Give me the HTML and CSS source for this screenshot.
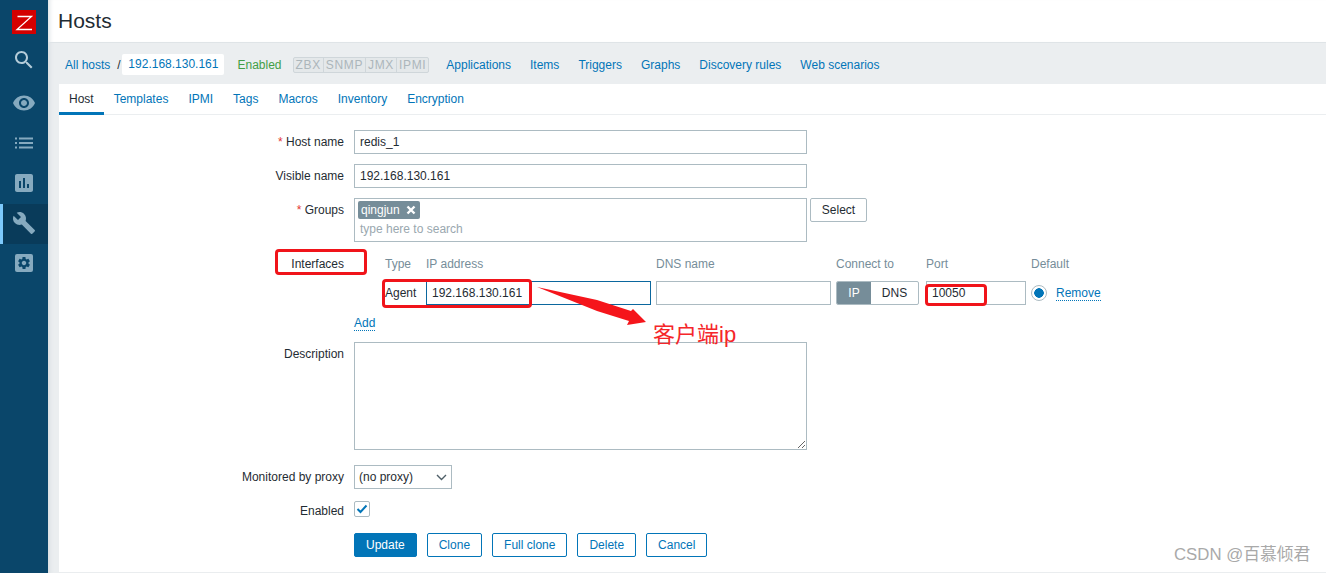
FILE: index.html
```html
<!DOCTYPE html>
<html lang="en">
<head>
<meta charset="utf-8">
<title>Hosts</title>
<link rel="stylesheet" href="styles.css">
</head>
<body>
<div class="app">
  <aside class="sidebar">
    <div class="logo"><svg width="24" height="24" viewBox="0 0 24 24"><rect width="24" height="24" fill="#d40000"/><polyline points="5.5,6.5 19.5,6.5 5,19.5 20,19.5" fill="none" stroke="#fff" stroke-width="1.3"/></svg></div>
    <div class="side-search"><svg class="ico bright" viewBox="0 0 24 24"><path d="M15.5 14h-.79l-.28-.27C15.41 12.59 16 11.11 16 9.5 16 5.91 13.09 3 9.5 3S3 5.91 3 9.5 5.91 16 9.5 16c1.61 0 3.09-.59 4.23-1.57l.27.28v.79l5 4.99L20.49 19l-4.99-5zm-6 0C7.01 14 5 11.99 5 9.5S7.01 5 9.5 5 14 7.01 14 9.5 11.99 14 9.5 14z"/></svg></div>
    <div class="side-item"><svg class="ico" viewBox="0 0 24 24"><path d="M12 4.5C7 4.5 2.73 7.61 1 12c1.73 4.39 6 7.5 11 7.5s9.27-3.11 11-7.5c-1.73-4.39-6-7.5-11-7.5zM12 17c-2.76 0-5-2.24-5-5s2.24-5 5-5 5 2.24 5 5-2.24 5-5 5zm0-8c-1.66 0-3 1.34-3 3s1.34 3 3 3 3-1.34 3-3-1.34-3-3-3z"/></svg></div>
    <div class="side-item"><svg class="ico" viewBox="0 0 24 24"><rect x="3" y="6.5" width="2" height="2"/><rect x="7" y="6.5" width="14" height="2"/><rect x="3" y="11" width="2" height="2"/><rect x="7" y="11" width="14" height="2"/><rect x="3" y="15.5" width="2" height="2"/><rect x="7" y="15.5" width="14" height="2"/></svg></div>
    <div class="side-item"><svg class="ico" viewBox="0 0 24 24"><path d="M19 3H5c-1.1 0-2 .9-2 2v14c0 1.1.9 2 2 2h14c1.1 0 2-.9 2-2V5c0-1.1-.9-2-2-2zM9 17H7v-7h2v7zm4 0h-2V7h2v10zm4 0h-2v-4h2v4z"/></svg></div>
    <div class="side-item active"><svg class="ico" viewBox="0 0 24 24"><path d="M22.7 19l-9.1-9.1c.9-2.3.4-5-1.5-6.9-2-2-5-2.4-7.4-1.3L9 6 6 9 1.6 4.7C.4 7.1.9 10.1 2.9 12.1c1.9 1.9 4.6 2.4 6.9 1.5l9.1 9.1c.4.4 1 .4 1.4 0l2.3-2.3c.5-.4.5-1.1.1-1.4z"/></svg></div>
    <div class="side-item"><svg class="ico" viewBox="0 0 24 24"><rect x="3" y="3" width="18" height="18" rx="2"/><path fill="#0a466a" transform="translate(12 12) scale(.62) translate(-12 -12)" d="M19.14 12.94c.04-.3.06-.61.06-.94 0-.32-.02-.64-.07-.94l2.03-1.58a.49.49 0 0 0 .12-.61l-1.92-3.32a.488.488 0 0 0-.59-.22l-2.39.96c-.5-.38-1.03-.7-1.62-.94l-.36-2.54a.484.484 0 0 0-.48-.41h-3.84c-.24 0-.43.17-.47.41l-.36 2.54c-.59.24-1.13.57-1.62.94l-2.39-.96c-.22-.08-.47 0-.59.22L2.74 8.87c-.12.21-.08.47.12.61l2.03 1.58c-.05.3-.07.62-.07.94s.02.64.07.94l-2.03 1.58a.49.49 0 0 0-.12.61l1.92 3.32c.12.22.37.29.59.22l2.39-.96c.5.38 1.03.7 1.62.94l.36 2.54c.05.24.24.41.48.41h3.84c.24 0 .44-.17.47-.41l.36-2.54c.59-.24 1.13-.56 1.62-.94l2.39.96c.22.08.47 0 .59-.22l1.92-3.32c.12-.22.07-.47-.12-.61l-2.01-1.58zM12 15.6c-1.98 0-3.6-1.62-3.6-3.6s1.62-3.6 3.6-3.6 3.6 1.62 3.6 3.6-1.62 3.6-3.6 3.6z"/></svg></div>
  </aside>

  <main class="content">
    <header class="page-header"><h1>Hosts</h1></header>

    <nav class="host-nav">
      <a class="link" href="#">All hosts</a>
      <span class="slash">/</span>
      <a class="link crumb" href="#">192.168.130.161</a>
      <span class="status">Enabled</span>
      <span class="avail"><span>ZBX</span><span>SNMP</span><span>JMX</span><span>IPMI</span></span>
      <span class="nav-links">
        <a class="link" href="#">Applications</a>
        <a class="link" href="#">Items</a>
        <a class="link" href="#">Triggers</a>
        <a class="link" href="#">Graphs</a>
        <a class="link" href="#">Discovery rules</a>
        <a class="link" href="#">Web scenarios</a>
      </span>
    </nav>

    <section class="panel">
      <div class="tabs">
        <a class="tab current" href="#">Host</a>
        <a class="tab" href="#">Templates</a>
        <a class="tab" href="#">IPMI</a>
        <a class="tab" href="#">Tags</a>
        <a class="tab" href="#">Macros</a>
        <a class="tab" href="#">Inventory</a>
        <a class="tab" href="#">Encryption</a>
      </div>

      <form class="form">
        <div class="row">
          <label class="lbl"><span class="req">*</span> Host name</label>
          <input class="field wide" type="text" value="redis_1">
        </div>
        <div class="row">
          <label class="lbl">Visible name</label>
          <input class="field wide" type="text" value="192.168.130.161">
        </div>
        <div class="row">
          <label class="lbl"><span class="req">*</span> Groups</label>
          <div class="multi">
            <div class="multi-box">
              <span class="chip">qingjun <svg width="10" height="10" viewBox="0 0 10 10"><path d="M1.5 1.5l7 7M8.5 1.5l-7 7" stroke="#fff" stroke-width="2.4" fill="none"/></svg></span>
              <span class="placeholder">type here to search</span>
            </div>
            <button class="select-btn" type="button">Select</button>
          </div>
        </div>

        <div class="row row-if">
          <label class="lbl lbl-if">Interfaces</label>
          <div class="if-grid">
            <span class="th">Type</span><span class="th">IP address</span><span class="th">DNS name</span><span class="th">Connect to</span><span class="th">Port</span><span class="th">Default</span>
            <span class="agent">Agent</span>
            <input class="field focus" type="text" value="192.168.130.161">
            <input class="field" type="text" value="">
            <span class="seg"><span class="seg-on">IP</span><span class="seg-off">DNS</span></span>
            <input class="field" type="text" value="10050">
            <span class="def"><span class="radio"></span><a class="dotted" href="#">Remove</a></span>
          </div>
        </div>
        <div class="row row-add">
          <span class="lbl"></span>
          <a class="dotted" href="#">Add</a>
        </div>

        <div class="row">
          <label class="lbl">Description</label>
          <textarea class="field area"></textarea>
        </div>
        <div class="row row-proxy">
          <label class="lbl">Monitored by proxy</label>
          <div class="field sel">(no proxy)<svg width="11" height="7" viewBox="0 0 11 7"><path d="M1 1l4.5 4.5L10 1" stroke="#4f5f68" stroke-width="1.4" fill="none"/></svg></div>
        </div>
        <div class="row row-en">
          <label class="lbl">Enabled</label>
          <span class="check"><svg width="12" height="10" viewBox="0 0 12 10"><path d="M1.5 5l3 3 6-6.5" stroke="#0275b8" stroke-width="2" fill="none"/></svg></span>
        </div>
        <div class="row row-btn">
          <span class="lbl"></span>
          <div class="buttons">
            <button class="btn primary" type="button">Update</button>
            <button class="btn" type="button">Clone</button>
            <button class="btn" type="button">Full clone</button>
            <button class="btn" type="button">Delete</button>
            <button class="btn" type="button">Cancel</button>
          </div>
        </div>
      </form>
    </section>
  </main>

  <div class="mark mark-if"></div>
  <div class="mark mark-agent"></div>
  <div class="mark mark-port"></div>
  <svg class="arrow" width="120" height="50" viewBox="0 0 120 50"><polygon points="0,0 60,13 94,24 96,22 109,35 90,38 92,34 60,24" fill="#f5151b"/></svg>
  <div class="note">客户端ip</div>
  <div class="watermark">CSDN @百慕倾君</div>
</div>
</body>
</html>
```
FILE: styles.css
```css
* { box-sizing: border-box; }
html, body { margin: 0; height: 573px; overflow: hidden; }
body { font: 12px/14px "Liberation Sans", Arial, sans-serif; color: #1f2c33; background: #ebeef0; }
a { text-decoration: none; }

.app { position: relative; display: flex; height: 573px; }

.sidebar { flex: 0 0 48px; background: #0a466a; display: flex; flex-direction: column; }
.logo { height: 44px; padding: 10px 0 0 12px; }
.logo svg { display: block; }
.side-search { height: 40px; display: flex; align-items: center; justify-content: center; margin-top: -4px; margin-bottom: 4px; }
.side-item { height: 40px; padding-bottom: 2px; display: flex; align-items: center; justify-content: center; }
.side-item.active { background: #093b5a; box-shadow: inset 3px 0 0 #7dc9fb; }
.ico { width: 24px; height: 24px; fill: #86aabf; display: block; }
.ico.bright { fill: #b4ccd9; }

.content { flex: 1; min-width: 0; display: flex; flex-direction: column; box-shadow: inset 5px 0 5px -4px #d3d9dd; }
.page-header { height: 43px; background: #fff; padding: 9px 0 0 10px; border-bottom: 1px solid #dfe4e7; box-shadow: inset 5px 0 5px -4px #d3d9dd; }
h1 { margin: 0; font-size: 21px; line-height: 24px; font-weight: 400; color: #1f2c33; }

.host-nav { height: 41px; display: flex; align-items: center; padding: 2px 0 0 17px; }
.link { color: #0275b8; }
.slash { margin-left: 7px; width: 5px; }
.crumb { background: #fff; padding: 3px 6px 4px 6px; height: 21px; border-radius: 2px; }
.status { color: #429e47; margin-left: 13px; }
.avail { display: flex; margin-left: 11px; height: 16px; border: 1px solid #cfd6da; border-radius: 2px; background: #e4e8ea; color: #acb6bb; font-size: 12px; line-height: 14px; }
.avail span { padding: 0 2px; border-left: 1px solid #cfd6da; letter-spacing: .65px; }
.avail span:first-child { border-left: 0; }
.nav-links { display: flex; gap: 19px; margin-left: 17px; }

.panel { flex: 1; margin: 0 0 1px 11px; background: #fff; }
.tabs { display: flex; height: 31px; border-bottom: 1px solid #ebeef0; }
.tab { padding: 8px 10px 0; color: #0275b8; height: 31px; }
.tab.current { color: #1f2c33; border-bottom: 3px solid #0275b8; }

.form { padding-top: 15px; display: flex; flex-direction: column; }
.row { display: flex; margin-bottom: 10px; }
.lbl { flex: 0 0 285px; text-align: right; margin-right: 10px; padding-top: 5px; }
.req { color: #e33734; }
.field { font: inherit; color: #1f2c33; height: 24px; border: 1px solid #acbbc2; background: #fff; padding: 0 5px; outline: 0; border-radius: 0; min-width: 0; }
.wide { width: 453px; }

.multi { display: flex; gap: 3px; align-items: flex-start; }
.multi-box { width: 453px; height: 44px; border: 1px solid #acbbc2; padding: 2px 3px; display: flex; flex-direction: column; align-items: flex-start; }
.chip { display: flex; align-items: center; gap: 6px; height: 18px; padding: 0 4px 0 3px; background: #768d99; color: #fff; border-radius: 2px; }
.placeholder { color: #9aa8af; margin-top: 3px; margin-left: 2px; }
.select-btn { font: inherit; color: #1f2c33; width: 57px; height: 24px; padding: 0; background: #fff; border: 1px solid #acbbc2; border-radius: 2px; }

.row-if { margin-bottom: 0; }
.lbl-if { padding-top: 0; align-self: flex-start; margin-top: 5px; }
.if-grid { margin-left: 31px; display: grid; grid-template-columns: 36px 225px 175px 85px 100px auto; column-gap: 5px; grid-template-rows: 14px 24px; row-gap: 10px; padding-top: 5px; align-items: center; justify-items: start; }
.if-grid .field { width: 100%; }
.th { color: #768d99; }
.focus { border-color: #0b679e; }
.seg { display: flex; width: 83px; height: 24px; border: 1px solid #acbbc2; border-radius: 2px; overflow: hidden; text-align: center; line-height: 22px; }
.seg-on { width: 34px; background: #768d99; color: #fff; }
.seg-off { flex: 1; }
.def { display: flex; align-items: center; gap: 9px; }
.def .dotted { margin-top: 2px; }
.radio { width: 16px; height: 16px; border-radius: 50%; border: 1px solid #acbbc2; background: radial-gradient(circle, #0275b8 0 4.5px, #fff 5px); }
.dotted { color: #0275b8; border-bottom: 1px dotted #0275b8; line-height: 13px; }

.row-add { margin: 12px 0 0; height: 25px; }
.row-add .dotted { height: 14px; }
.area { width: 453px; height: 108px; resize: both; padding: 4px 5px; display: block; }
.row-add .lbl { padding: 0; }

.row-proxy { margin-top: 5px; }
.sel { width: 98px; display: flex; align-items: center; justify-content: space-between; padding: 0 4px; line-height: 22px; }
.row-en { margin-bottom: 0; margin-top: 2px; height: 22px; }
.row-en .lbl { padding-top: 3px; }
.check { width: 16px; height: 16px; border: 1px solid #acbbc2; border-radius: 2px; display: flex; align-items: center; justify-content: center; }

.row-btn { margin: 10px 0 0; }
.row-btn .lbl { padding: 0; }
.buttons { display: flex; gap: 10px; }
.btn { font: inherit; height: 24px; padding: 0 11px; background: #fff; color: #0275b8; border: 1px solid #0275b8; border-radius: 2px; }
.primary { background: #0275b8; color: #fff; }

.mark { position: absolute; border: 3px solid #f0141a; border-radius: 4px; }
.mark-if { left: 275px; top: 249px; width: 92px; height: 26px; }
.mark-agent { left: 382px; top: 279px; width: 150px; height: 29px; }
.mark-port { left: 925px; top: 284px; width: 62px; height: 22px; }
.arrow { position: absolute; left: 537px; top: 287px; }
.note { position: absolute; left: 653px; top: 322px; font: 22px/26px "Liberation Sans", "Noto Sans CJK SC", sans-serif; color: #f5262a; }
.watermark { position: absolute; left: 1174px; top: 545px; font: 16.8px/20px "Liberation Sans", "Noto Sans CJK SC", sans-serif; color: #a9a9a9; }
```
